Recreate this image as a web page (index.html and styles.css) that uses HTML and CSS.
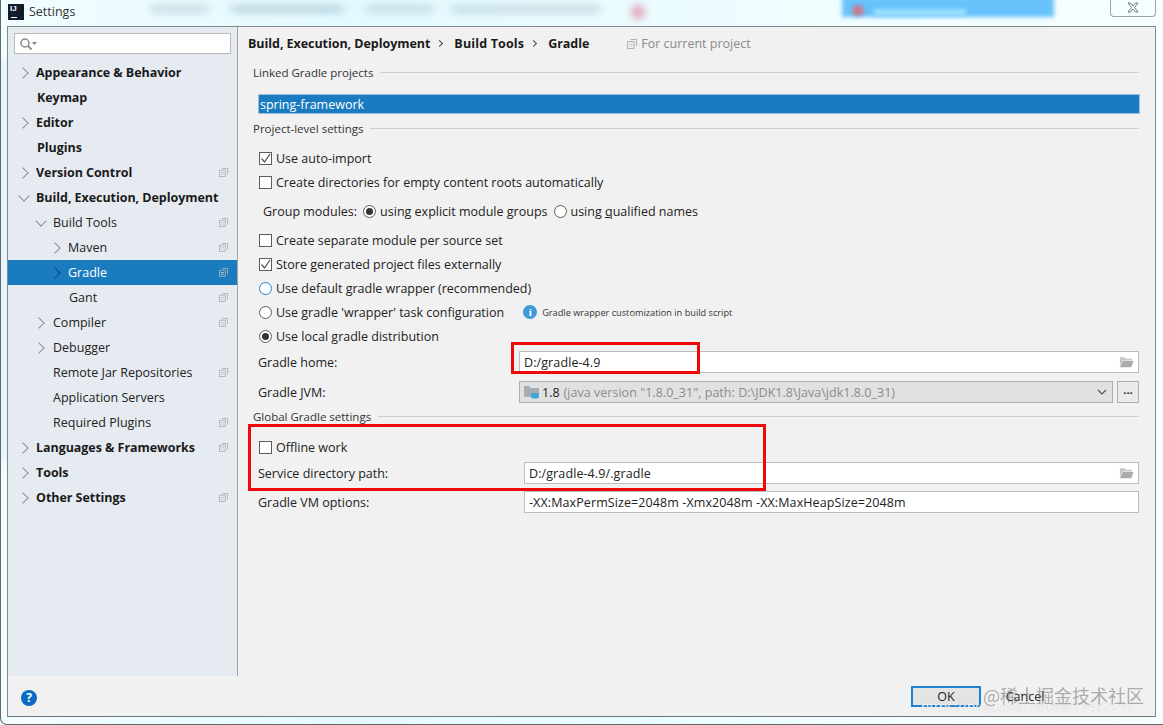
FILE: index.html
```html
<!DOCTYPE html>
<html lang="en">
<head>
<meta charset="utf-8">
<title>Settings</title>
<link rel="stylesheet" href="styles.css">
</head>
<body>
<svg class="defs" width="0" height="0" aria-hidden="true">
  <symbol id="copy" viewBox="0 0 10 10"><path d="M3.5.5h6v6.5M.5 2.5h6.5v7H.5z" fill="none" stroke="#a9b0b6"/><path d="M2 5h3.5M2 7h3.5" stroke="#c2c7cc"/></symbol>
  <symbol id="folder" viewBox="0 0 16 12"><path d="M1 1h5l1 1.500h7v2H4L1 10z" fill="#c6c6c6"/><path d="M4 5h11.500L13 11.500H1z" fill="#a9aca9"/></symbol>
  <symbol id="check" viewBox="0 0 13 13"><path d="M2.500 6.500l3 3.500 5.500-8" fill="none" stroke="#555" stroke-width="1.300"/></symbol>
</svg>
<div class="backdrop">
  <span class="smear smear-a"></span>
  <span class="smear smear-b"></span>
  <span class="smear smear-c"></span>
  <span class="smear smear-e"></span>
  <span class="smear smear-f"></span>
  <span class="smear smear-d"></span>
</div>
<div class="window">
  <header class="titlebar">
    <span class="app-logo"><b>IJ</b><i></i></span>
    <span class="app-title">Settings</span>
    <button class="close-btn" aria-label="Close"><svg width="12" height="11" viewBox="0 0 12 11"><path d="M1 1h2.500L6 4l2.500-3H11L7.500 5.500 11 10H8.500L6 7l-2.500 3H1l3.500-4.500z" fill="#fff" stroke="#555" stroke-width=".8"/></svg></button>
  </header>
  <div class="client">
    <div class="main">
      <aside class="sidebar">
        <div class="search">
          <svg width="18" height="14" viewBox="0 0 18 14"><circle cx="6" cy="6" r="4" fill="none" stroke="#8a8a8a" stroke-width="1.500"/><path d="M9 9l3.500 3.500" stroke="#8a8a8a" stroke-width="1.800"/><path d="M13 5h5l-2.500 3z" fill="#8a8a8a"/></svg>
        </div>
        <nav class="tree">
          <div class="node lvl0 bold"><i class="arrow"></i><span>Appearance &amp; Behavior</span></div>
          <div class="node lvl0 bold leaf"><span>Keymap</span></div>
          <div class="node lvl0 bold"><i class="arrow"></i><span>Editor</span></div>
          <div class="node lvl0 bold leaf"><span>Plugins</span></div>
          <div class="node lvl0 bold"><i class="arrow"></i><span>Version Control</span><svg class="copy"><use href="#copy"/></svg></div>
          <div class="node lvl0 bold"><i class="arrow open"></i><span>Build, Execution, Deployment</span></div>
          <div class="node lvl1"><i class="arrow open"></i><span>Build Tools</span><svg class="copy"><use href="#copy"/></svg></div>
          <div class="node lvl2"><i class="arrow"></i><span>Maven</span><svg class="copy"><use href="#copy"/></svg></div>
          <div class="node lvl2 selected"><i class="arrow"></i><span>Gradle</span><svg class="copy"><use href="#copy"/></svg></div>
          <div class="node lvl2 leaf"><span>Gant</span><svg class="copy"><use href="#copy"/></svg></div>
          <div class="node lvl1"><i class="arrow"></i><span>Compiler</span><svg class="copy"><use href="#copy"/></svg></div>
          <div class="node lvl1"><i class="arrow"></i><span>Debugger</span></div>
          <div class="node lvl1 leaf"><span>Remote Jar Repositories</span><svg class="copy"><use href="#copy"/></svg></div>
          <div class="node lvl1 leaf"><span>Application Servers</span></div>
          <div class="node lvl1 leaf"><span>Required Plugins</span><svg class="copy"><use href="#copy"/></svg></div>
          <div class="node lvl0 bold"><i class="arrow"></i><span>Languages &amp; Frameworks</span><svg class="copy"><use href="#copy"/></svg></div>
          <div class="node lvl0 bold"><i class="arrow"></i><span>Tools</span></div>
          <div class="node lvl0 bold"><i class="arrow"></i><span>Other Settings</span><svg class="copy"><use href="#copy"/></svg></div>
        </nav>
      </aside>
      <section class="content">
        <div class="crumbs">
          <b>Build, Execution, Deployment</b><i class="crumb-sep"></i><b class="crumb-wide">Build Tools</b><i class="crumb-sep"></i><b>Gradle</b>
          <span class="scope"><svg width="10" height="10"><use href="#copy"/></svg>For current project</span>
        </div>
        <div class="title-sep h-linked"><span>Linked Gradle projects</span></div>
        <div class="project-list">spring-framework</div>
        <div class="title-sep h-project"><span>Project-level settings</span></div>
        <div class="row r-auto"><i class="cb"><svg width="13" height="13"><use href="#check"/></svg></i>Use auto-import</div>
        <div class="row r-24"><i class="cb"></i>Create directories for empty content roots automatically</div>
        <div class="row r-group"><span class="group-label">Group modules:</span><i class="rb on"></i><span>using explicit module <u>g</u>roups</span><i class="rb rb-second"></i><span>using <u>q</u>ualified names</span></div>
        <div class="row r-sep"><i class="cb"></i>Create separate module per source set</div>
        <div class="row r-24"><i class="cb"><svg width="13" height="13"><use href="#check"/></svg></i>Store generated project files externally</div>
        <div class="row r-24"><i class="rb focus"></i>Use default gradle wrapper (recommended)</div>
        <div class="row r-24"><i class="rb"></i>Use gradle 'wrapper' task configuration<i class="info">i</i><span class="hint">Gradle wrapper customization in build script</span></div>
        <div class="row r-24"><i class="rb on"></i>Use local gradle distribution</div>
        <div class="field r-home"><label class="label-short">Gradle home:</label><div class="input">D:/gradle-4.9<svg class="folder"><use href="#folder"/></svg></div></div>
        <div class="field r-jvm"><label class="label-short">Gradle JVM:</label>
          <div class="combo-wrap">
            <div class="combo">
              <svg class="jdk" width="17" height="15" viewBox="0 0 17 15"><path d="M0 1h5l1.500 2H15v9H0z" fill="#a4adb3"/><path d="M7 8h8v3.500q0 2-2 2H9q-2 0-2-2z" fill="#3fa8d8"/></svg>
              <b>1.8</b><span class="combo-path">(java version "1.8.0_31", path: D:\JDK1.8\Java\jdk1.8.0_31)</span>
              <svg class="chev" width="10" height="6" viewBox="0 0 10 6"><path d="M1 1l4 4 4-4" fill="none" stroke="#555" stroke-width="1.100"/></svg>
            </div>
            <button class="more">...</button>
          </div>
        </div>
        <div class="title-sep h-global"><span>Global Gradle settings</span></div>
        <div class="row r-offline"><i class="cb"></i>Offline work</div>
        <div class="field r-service"><label>Service directory path:</label><div class="input">D:/gradle-4.9/.gradle<svg class="folder"><use href="#folder"/></svg></div></div>
        <div class="field r-vm"><label>Gradle VM options:</label><div class="input">-XX:MaxPermSize=2048m -Xmx2048m -XX:MaxHeapSize=2048m</div></div>
      </section>
    </div>
    <footer class="footer">
      <span class="help">?</span>
      <button class="btn btn-ok">OK</button>
      <button class="btn btn-cancel">Cancel</button>
    </footer>
  </div>
</div>
<div class="mark mark-home"></div>
<div class="mark mark-global"></div>
<div class="wm-white">https://blog.csdn.net/u011472791</div>
<div class="wm-gray">@稀土掘金技术社区</div>
</body>
</html>
```
FILE: styles.css
```css
* { box-sizing: border-box; }
html, body { margin: 0; height: 100%; }
body {
  width: 1163px;
  height: 725px;
  overflow: hidden;
  position: relative;
  background: linear-gradient(90deg, #f2fdff 0, #e4faff 30%, #effdff 70%, #f6feff 100%);
  font-family: "Open Sans", "Noto Sans", sans-serif;
  font-size: 12.5px;
  color: #222;
}
.defs { position: absolute; }

.backdrop { position: absolute; inset: 0; overflow: hidden; }
.smear { position: absolute; filter: blur(4px); }
.smear-a {
  left: 150px; top: 6px; width: 450px; height: 6px; opacity: .7;
  background: linear-gradient(90deg, #a9c0cc 0 12%, transparent 14% 17%, #8fb0c2 19% 42%, transparent 44% 47%, #a9c0cc 49% 62%, transparent 64% 66%, #a9c0cc 68% 100%);
}
.smear-b { left: 631px; top: 5px; width: 14px; height: 14px; border-radius: 50%; background: #d9829a; opacity: .75; }
.smear-c { left: 842px; top: -3px; width: 212px; height: 20px; background: #67c2fb; filter: blur(2px); }
.smear-e { left: 852px; top: 5px; width: 12px; height: 11px; border-radius: 50%; background: #cc7a8e; filter: blur(2px); }
.smear-f { left: 874px; top: 9px; width: 92px; height: 7px; background: #98e0fd; filter: blur(2px); }
.smear-d { left: 1px; top: 60px; width: 5px; height: 400px; background: #b5d6ea; opacity: .5; }

.window {
  position: absolute;
  left: 0;
  top: 0;
  width: 1163px;
  height: 725px;
  padding: 0 7px 7px 6px;
  display: flex;
  flex-direction: column;
  border-left: 1px solid #666;
  border-bottom: 1px solid #666;
  border-bottom-left-radius: 7px;
}
.titlebar { height: 26px; display: flex; align-items: center; padding-left: 1px; flex: none; }
.app-logo {
  width: 16px; height: 16px; background: #111c2c; margin-top: -2px; margin-right: 5px; position: relative;
  color: #fff; font: bold 8px/10px "Liberation Sans", sans-serif; display: block; padding-left: 2px;
}
.app-logo b { display: block; }
.app-logo i { position: absolute; left: 3px; bottom: 2px; width: 6px; height: 1px; background: #fff; }
.app-title { font-size: 12.5px; color: #333; margin-top: -3px; }
.close-btn {
  margin-left: auto; margin-right: 0; width: 46px; height: 17px; margin-top: -10px; padding: 0;
  background: transparent; border: 1px solid #9aa3a8; border-top: 0; border-radius: 0 0 4px 4px;
  display: flex; align-items: center; justify-content: center;
}

.client {
  flex: 1;
  min-height: 0;
  display: flex;
  flex-direction: column;
  background: #f1f1f1;
  border: 1px solid #7f8a8a;
  border-bottom-color: #6f7878;
}
.main { flex: 1; min-height: 0; display: flex; }
.sidebar { width: 230px; flex: none; background: #e6ebf1; border-right: 1px solid #a3a3a3; padding-top: 6px; }
.search {
  margin: 0 6px; width: 217px; height: 21px; background: #fff; border: 1px solid #b9b9b9;
  display: flex; align-items: center; padding-left: 4px;
}
.tree { margin-top: 6px; }
.node { height: 25px; display: flex; align-items: center; color: #222; padding-right: 9px; position: relative; }
.node.bold { font-weight: 700; color: #1a1a1a; letter-spacing: -.05px; }
.node .copy { width: 9px; height: 9px; margin-left: auto; }
.lvl0 { padding-left: 14px; }
.lvl1 { padding-left: 31px; }
.lvl2 { padding-left: 46px; }
.leaf.lvl0 { padding-left: 29px; }
.leaf.lvl1 { padding-left: 45px; }
.leaf.lvl2 { padding-left: 61px; }
.arrow { width: 14px; flex: none; height: 9px; position: relative; }
.arrow::before {
  content: ""; position: absolute; left: -3px; top: 1px; width: 7px; height: 7px;
  border-top: 1.500px solid #8d9195; border-right: 1.500px solid #8d9195; transform: rotate(45deg);
}
.lvl1 .arrow::before { left: -4px; }
.arrow.open::before { transform: rotate(135deg); left: -2px; top: -1px; }
.lvl1 .arrow.open::before { left: -2px; }
.selected { background: #1a7bbf; color: #fff; }
.selected .arrow::before { border-color: #0e4d85; }

.content { flex: 1; min-width: 0; padding: 0 15px 0 10px; }
.crumbs { height: 33px; display: flex; align-items: center; color: #1a1a1a; }
.crumbs b { font-weight: 700; letter-spacing: -.05px; }
.crumbs .crumb-wide { letter-spacing: .15px; }
.crumb-sep {
  width: 5px; height: 5px; margin: 0 12px 0 7px; border-top: 1px solid #444; border-right: 1px solid #444; transform: rotate(45deg);
}
.scope { margin-left: 38px; color: #8a8a8a; display: flex; align-items: center; gap: 4px; }

.title-sep { display: flex; align-items: center; padding-left: 5px; font-size: 11.5px; color: #333; gap: 7px; }
.title-sep::after { content: ""; flex: 1; border-top: 1px solid #cfcfcf; margin-right: 1px; }
.h-linked { height: 24px; }
.h-project { height: 19px; margin-top: 5px; }
.h-global { height: 20px; margin-top: 2px; }
.project-list {
  height: 20px; margin: 10px 0 0 10px; background: #1a7bc0; color: #fff; padding-left: 1px;
  line-height: 20px; border: 1px solid #9fc0d8;
}

.row { display: flex; align-items: center; height: 24px; padding-left: 11px; color: #222; }
.r-auto { margin-top: 8px; }
.r-group { height: 24px; margin-top: 5px; padding-left: 15px; }
.r-sep { margin-top: 5px; }
.r-offline { margin-top: 9px; }
.group-label { margin-right: 6px; }
.rb-second { margin-left: 6px; }
.row u { text-decoration-thickness: 1px; }

.cb {
  width: 13px; height: 13px; flex: none; margin-right: 4px; background: #fff; border: 1px solid #5c5c5c;
  display: block; position: relative;
}
.cb svg { position: absolute; left: -1px; top: -1px; }
.rb {
  width: 13px; height: 13px; flex: none; margin-right: 4px; background: #fff; border: 1px solid #5c5c5c;
  border-radius: 50%; display: block; position: relative;
}
.rb.focus { border-color: #1f84d0; }
.rb.on::after {
  content: ""; position: absolute; left: 2px; top: 2px; width: 7px; height: 7px; border-radius: 50%; background: #333;
}
.info {
  width: 14px; height: 14px; border-radius: 50%; background: #3d9bd9; color: #fff; margin-left: 19px; margin-right: 5px;
  font: bold 11px/14px "Liberation Serif", serif; text-align: center; display: block; flex: none;
}
.hint { font-size: 9.2px; color: #333; }

.field { display: flex; align-items: center; padding-left: 10px; padding-right: 1px; }
.field label { width: 266px; flex: none; }
.field .label-short { width: 261px; }
.r-home { height: 24px; margin-top: 2px; }
.r-jvm { height: 24px; margin-top: 6px; }
.r-service { height: 24px; margin-top: 2px; }
.r-vm { height: 24px; margin-top: 5px; }
.input {
  flex: 1; height: 22px; background: #fff; border: 1px solid #bdbdbd; padding-left: 4px; color: #222;
  display: flex; align-items: center; letter-spacing: .1px;
}
.folder { width: 15px; height: 12px; margin-left: auto; margin-right: 4px; }
.combo-wrap { flex: 1; display: flex; gap: 4px; }
.combo {
  flex: 1; height: 22px; background: #e1e1e1; border: 1px solid #adadad; display: flex; align-items: center;
  padding-left: 4px; color: #8c8c8c; white-space: nowrap;
}
.combo b { font-weight: 400; color: #222; margin-left: 1px; margin-right: 4px; }
.combo-path { letter-spacing: .03px; }
.chev { margin-left: auto; margin-right: 5px; }
.more {
  width: 22px; height: 22px; padding: 0 0 6px; background: #eaeaea; border: 1px solid #adadad; color: #222;
  font: bold 11px/1 "Open Sans", sans-serif;
}

.footer { height: 40px; flex: none; display: flex; align-items: center; padding: 3px 0 0 13px; }
.help {
  width: 16px; height: 16px; border-radius: 50%; background: #0a6cc4; color: #fff;
  font: 700 12px/16px "Open Sans", sans-serif; text-align: center;
}
.btn { height: 21px; width: 70px; padding: 0; font: 12.5px "Open Sans", sans-serif; color: #222; margin-top: -2px; }
.btn-ok { margin-left: auto; background: #e4e4e4; border: 2px solid #1c82d2; }
.btn-cancel { margin-left: 9px; margin-right: 95px; background: transparent; border: 0; }

.mark { position: absolute; border: 3px solid #ee0a0a; }
.mark-home { left: 511px; top: 342px; width: 189px; height: 32px; }
.mark-global { left: 248px; top: 424px; width: 518px; height: 67px; }
.wm-gray {
  position: absolute; left: 983px; top: 682px; font: 18px/26px "Noto Sans CJK SC", sans-serif; color: rgba(110,110,110,.55);
  white-space: nowrap; width: 170px;
}
.wm-white {
  position: absolute; left: 921px; top: 697px; font: 13.5px/18px "Open Sans", sans-serif; color: rgba(255,255,255,.9);
  text-shadow: 0 0 1px rgba(150,150,150,.6); white-space: nowrap;
}
```
